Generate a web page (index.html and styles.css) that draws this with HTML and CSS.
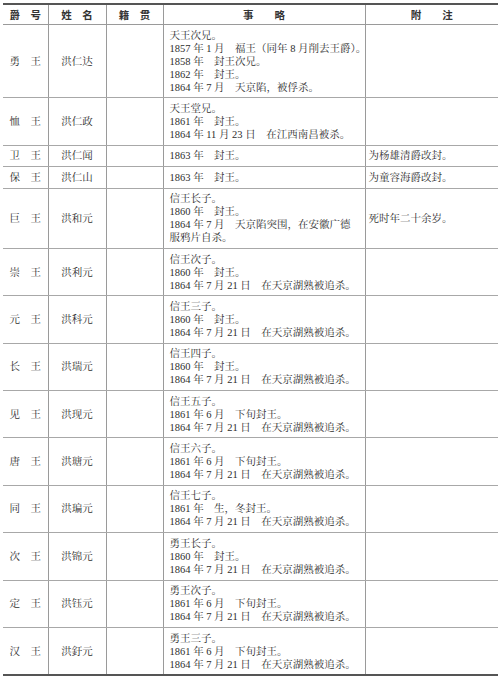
FILE: index.html
```html
<!DOCTYPE html>
<html lang="zh-CN">
<head>
<meta charset="utf-8">
<title>洪氏诸王表</title>
<link rel="stylesheet" href="styles.css">
</head>
<body>
<table class="tbl">
<colgroup>
<col class="c1"><col class="c2"><col class="c3"><col class="c4"><col class="c5">
</colgroup>
<thead>
<tr><th>爵　号</th><th>姓　名</th><th>籍　贯</th><th>事　　略</th><th>附　　注</th></tr>
</thead>
<tbody>
<tr><td class="t">勇　王</td><td class="n">洪仁达</td><td></td><td class="e"><div class="ln">天王次兄。</div><div class="ln">1857 年 1 月　福王（同年 8 月削去王爵）。</div><div class="ln">1858 年　封王次兄。</div><div class="ln">1862 年　封王。</div><div class="ln">1864 年 7 月　天京陷，被俘杀。</div></td><td class="r"></td></tr>
<tr><td class="t">恤　王</td><td class="n">洪仁政</td><td></td><td class="e"><div class="ln">天王堂兄。</div><div class="ln">1861 年　封王。</div><div class="ln">1864 年 11 月 23 日　在江西南昌被杀。</div></td><td class="r"></td></tr>
<tr><td class="t">卫　王</td><td class="n">洪仁闻</td><td></td><td class="e"><div class="ln">1863 年　封王。</div></td><td class="r">为杨雄清爵改封。</td></tr>
<tr><td class="t">保　王</td><td class="n">洪仁山</td><td></td><td class="e"><div class="ln">1863 年　封王。</div></td><td class="r">为童容海爵改封。</td></tr>
<tr><td class="t">巨　王</td><td class="n">洪和元</td><td></td><td class="e"><div class="ln">信王长子。</div><div class="ln">1860 年　封王。</div><div class="ln">1864 年 7 月　天京陷突围，在安徽广德</div><div class="ln">服鸦片自杀。</div></td><td class="r">死时年二十余岁。</td></tr>
<tr><td class="t">崇　王</td><td class="n">洪利元</td><td></td><td class="e"><div class="ln">信王次子。</div><div class="ln">1860 年　封王。</div><div class="ln">1864 年 7 月 21 日　在天京湖熟被追杀。</div></td><td class="r"></td></tr>
<tr><td class="t">元　王</td><td class="n">洪科元</td><td></td><td class="e"><div class="ln">信王三子。</div><div class="ln">1860 年　封王。</div><div class="ln">1864 年 7 月 21 日　在天京湖熟被追杀。</div></td><td class="r"></td></tr>
<tr><td class="t">长　王</td><td class="n">洪瑞元</td><td></td><td class="e"><div class="ln">信王四子。</div><div class="ln">1860 年　封王。</div><div class="ln">1864 年 7 月 21 日　在天京湖熟被追杀。</div></td><td class="r"></td></tr>
<tr><td class="t">见　王</td><td class="n">洪现元</td><td></td><td class="e"><div class="ln">信王五子。</div><div class="ln">1861 年 6 月　下旬封王。</div><div class="ln">1864 年 7 月 21 日　在天京湖熟被追杀。</div></td><td class="r"></td></tr>
<tr><td class="t">唐　王</td><td class="n">洪瑭元</td><td></td><td class="e"><div class="ln">信王六子。</div><div class="ln">1861 年 6 月　下旬封王。</div><div class="ln">1864 年 7 月 21 日　在天京湖熟被追杀。</div></td><td class="r"></td></tr>
<tr><td class="t">同　王</td><td class="n">洪㻞元</td><td></td><td class="e"><div class="ln">信王七子。</div><div class="ln">1861 年　生，冬封王。</div><div class="ln">1864 年 7 月 21 日　在天京湖熟被追杀。</div></td><td class="r"></td></tr>
<tr><td class="t">次　王</td><td class="n">洪锦元</td><td></td><td class="e"><div class="ln">勇王长子。</div><div class="ln">1860 年　封王。</div><div class="ln">1864 年 7 月 21 日　在天京湖熟被追杀。</div></td><td class="r"></td></tr>
<tr><td class="t">定　王</td><td class="n">洪钰元</td><td></td><td class="e"><div class="ln">勇王次子。</div><div class="ln">1861 年 6 月　下旬封王。</div><div class="ln">1864 年 7 月 21 日　在天京湖熟被追杀。</div></td><td class="r"></td></tr>
<tr><td class="t">汉　王</td><td class="n">洪釪元</td><td></td><td class="e"><div class="ln">勇王三子。</div><div class="ln">1861 年 6 月　下旬封王。</div><div class="ln">1864 年 7 月 21 日　在天京湖熟被追杀。</div></td><td class="r"></td></tr>
</tbody>
</table>
</body>
</html>
```

FILE: styles.css
```css
html, body {
  margin: 0;
  padding: 0;
  background: #ffffff;
}
body {
  padding: 3px 2px 0 3px;
  font-family: "Liberation Serif", "Noto Serif CJK SC", "Noto Sans CJK SC", serif;
  color: #2e2e2e;
}
.tbl {
  width: 495px;
  border-collapse: collapse;
  table-layout: fixed;
  border-top: 2px solid #555;
  border-bottom: 2px solid #555;
}
.c1 { width: 45px; }
.c2 { width: 58px; }
.c3 { width: 57px; }
.c4 { width: 202px; }
.c5 { width: 133px; }
th {
  height: 19px;
  padding: 0;
  font-family: "Noto Sans CJK SC", sans-serif;
  font-weight: 700;
  font-size: 10.5px;
  line-height: 12px;
  color: #333;
  text-align: center;
  vertical-align: middle;
  border-left: 1px solid #9a9a9a;
  border-bottom: 1px solid #9a9a9a;
}
td {
  padding: 3.7px 0;
  font-size: 10.5px;
  line-height: 13px;
  vertical-align: middle;
  border-left: 1px solid #9a9a9a;
  border-bottom: 1px solid #a8a8a8;
}
th:first-child, td:first-child { border-left: none; }
.t, .n { text-align: center; }
.e { padding-left: 6px; padding-right: 2px; }
.r { padding-left: 3px; padding-right: 2px; }
.ln {
  height: 13px;
  white-space: nowrap;
}
```
